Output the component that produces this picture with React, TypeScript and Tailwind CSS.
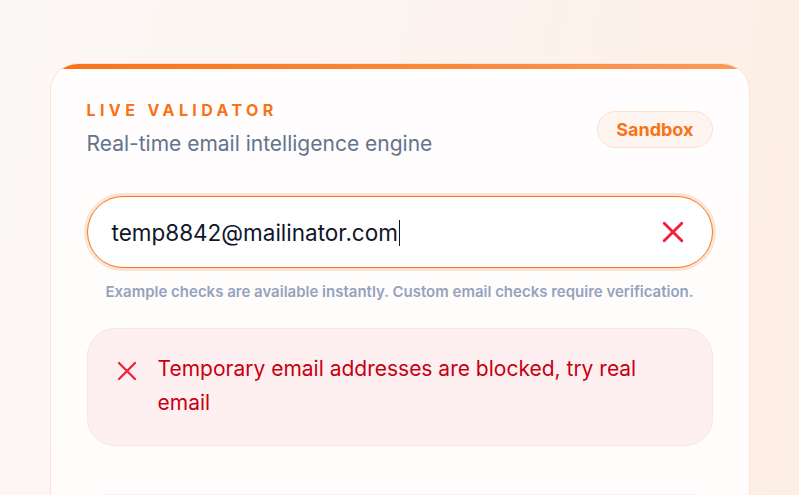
import React from "react";

function Cross({ size, stroke }: { size: number; stroke: number }) {
  return (
    <svg width={size} height={size} viewBox="0 0 20 20" fill="none" className="shrink-0">
      <path d="M2 2 L18 18 M18 2 L2 18" stroke="currentColor" strokeWidth={stroke} strokeLinecap="round" />
    </svg>
  );
}

export default function App() {
  return (
    <div className="h-[495px] overflow-hidden bg-[linear-gradient(100deg,#fcf8f6_0%,#fcf3ee_55%,#fdeee4_100%)] pt-[63px] font-['Inter',sans-serif]">
      <div className="mx-auto w-[700px] overflow-hidden rounded-[28px] border border-[#fde3d4] bg-[linear-gradient(180deg,#fffdfd,#fffcfb)]">
        <div className="h-[5px] bg-[linear-gradient(90deg,#f97316,#fb8a3c_60%,#fd9a5a)]" />

        <div className="px-9 pt-[31px]">
          <div className="flex items-center justify-between">
            <div>
              <p className="text-[16px] leading-5 font-bold tracking-[0.275em] text-[#f97316]">LIVE VALIDATOR</p>
              <p className="mt-[10px] text-[21px] leading-7 text-[#62748e]">Real-time email intelligence engine</p>
            </div>
            <span className="rounded-full border border-[#fde0cf] bg-[#fff5f0] px-[18px] py-[6px] text-[18px] leading-[23px] font-bold text-[#f97316]">
              Sandbox
            </span>
          </div>

          <div className="mt-[38px] flex h-[72px] items-center rounded-full border border-[#f97316] bg-white pr-[28px] pl-6 shadow-[0_0_0_3px_#fde3d2]">
            <span className="flex-1 text-[22.5px] text-[#0f172b]">
              temp8842@mailinator.com<span className="ml-px inline-block h-[26px] w-px translate-y-[5px] bg-[#0f172b]" />
            </span>
            <span className="text-[#f0213a]">
              <Cross size={22} stroke={2.6} />
            </span>
          </div>

          <p className="mt-[14px] text-center text-[15px] leading-5 font-semibold text-[#94a3bd]">
            Example checks are available instantly. Custom email checks require verification.
          </p>

          <div className="mt-[26px] flex gap-[21px] rounded-[28px] border border-[#fde3e3] bg-[#fef0f1] pt-[23px] pb-[25px] pr-9 pl-[29px]">
            <span className="mt-[9px] text-[#f0213a]">
              <Cross size={20} stroke={2.3} />
            </span>
            <p className="text-[21px] leading-[34px] text-[#c70012]">
              Temporary email addresses are blocked, try real email
            </p>
          </div>

          <div className="mt-[48px] h-[60px] rounded-t-[20px] border border-[#eef0f8]" />
        </div>
      </div>
    </div>
  );
}
